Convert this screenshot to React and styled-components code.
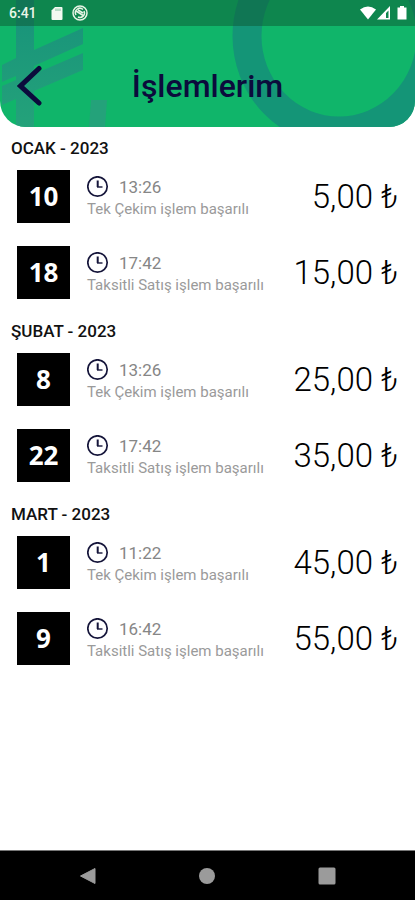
import React from 'react'
import styled, { createGlobalStyle } from 'styled-components'

const months = [
    {
        title: 'OCAK - 2023',
        items: [
            { day: 10, time: '13:26', text: 'Tek Çekim işlem başarılı', amount: '5,00 ₺' },
            { day: 18, time: '17:42', text: 'Taksitli Satış işlem başarılı', amount: '15,00 ₺' },
        ],
    },
    {
        title: 'ŞUBAT - 2023',
        items: [
            { day: 8, time: '13:26', text: 'Tek Çekim işlem başarılı', amount: '25,00 ₺' },
            { day: 22, time: '17:42', text: 'Taksitli Satış işlem başarılı', amount: '35,00 ₺' },
        ],
    },
    {
        title: 'MART - 2023',
        items: [
            { day: 1, time: '11:22', text: 'Tek Çekim işlem başarılı', amount: '45,00 ₺' },
            { day: 9, time: '16:42', text: 'Taksitli Satış işlem başarılı', amount: '55,00 ₺' },
        ],
    },
]

function HeaderArt() {
    return (
        <Art viewBox="0 0 415 127" preserveAspectRatio="xMidYMin slice" aria-hidden="true">
            <defs>
                <linearGradient id="lira" x1="0" y1="0" x2="0" y2="1">
                    <stop offset="0" stopColor="#17927a" />
                    <stop offset="1" stopColor="#24a27a" />
                </linearGradient>
            </defs>
            <path
                fill="url(#lira)"
                d="M16 0H34V50L83 28V44L34 66V74L83 53V70L34 91V127H16V99L2 105V86L16 80V76L2 82V65L16 58Z"
            />
            <path fill="#24a27a" d="M91 100H107L105 127H89Z" />
            <ellipse cx="339" cy="36" rx="92" ry="95" fill="none" stroke="#149577" strokeWidth="29" />
        </Art>
    )
}

function Clock() {
    return (
        <svg width="22" height="22" viewBox="0 0 22 22" fill="none" stroke="#15153a" aria-hidden="true">
            <circle cx="10.5" cy="10.5" r="9.7" strokeWidth="1.7" />
            <path d="M10.7 4.5V11" strokeWidth="2" />
            <path d="M10 11H15.5" strokeWidth="1.4" />
        </svg>
    )
}

function StatusIcons() {
    return (
        <IconGroup>
            <svg width="12" height="15" viewBox="0 0 12 15" aria-hidden="true">
                <path fill="#f4faf2" d="M4 1H10.5Q11.5 1 11.5 2V13Q11.5 14 10.5 14H1.5Q.5 14 .5 13V4.5Z" />
                <path stroke="#7fbf9c" d="M5 2.5V5M7 2.5V5M9 2.5V5" />
            </svg>
            <svg width="16" height="16" viewBox="0 0 16 16" fill="none" stroke="#e6f4e4" aria-hidden="true">
                <circle cx="8" cy="8" r="7" strokeWidth="1.5" />
                <path d="M4 10A4.5 4.5 0 0 1 11 4.5M12 6A4.5 4.5 0 0 1 6 12M4 6L12 11M6 5L11 8" strokeWidth="1.5" />
            </svg>
        </IconGroup>
    )
}

function SignalIcons() {
    return (
        <svg width="50" height="16" viewBox="0 0 50 16" aria-hidden="true">
            <path fill="#fff" d="M1 4.5Q9 -1.5 17 4.5L9 14.5Z" />
            <path fill="#fff" fillRule="evenodd" d="M18 14.5L31 1V14.5ZM27 8V13H29.5V5.5Z" />
            <path fill="#fff" d="M41 1H45V2.5H47.5V14.5H38.5V2.5H41Z" />
        </svg>
    )
}

function App() {
    return (
        <Screen>
            <GlobalStyle />
            <Header>
                <HeaderArt />
                <StatusBar>
                    <span>6:41</span>
                    <StatusIcons />
                    <SignalIcons />
                </StatusBar>
                <TitleBar>
                    <BackButton type="button" aria-label="Geri">
                        <svg width="26" height="42" viewBox="0 0 26 42" aria-hidden="true">
                            <path
                                d="M22 3.5L3.5 21L22 38"
                                fill="none"
                                stroke="#0b0b3c"
                                strokeWidth="5"
                                strokeLinecap="round"
                            />
                        </svg>
                    </BackButton>
                    <Title>İşlemlerim</Title>
                </TitleBar>
            </Header>

            <Main>
                {months.map((month) => (
                    <section key={month.title}>
                        <MonthTitle>{month.title}</MonthTitle>
                        <List>
                            {month.items.map((item) => (
                                <Row key={item.day}>
                                    <Day>{item.day}</Day>
                                    <Info>
                                        <Time>
                                            <Clock />
                                            {item.time}
                                        </Time>
                                        <Description>{item.text}</Description>
                                    </Info>
                                    <Amount>{item.amount}</Amount>
                                </Row>
                            ))}
                        </List>
                    </section>
                ))}
            </Main>

            <NavBar>
                <NavButton type="button" aria-label="Geri git">
                    <svg width="18" height="18" viewBox="0 0 18 18" aria-hidden="true">
                        <path d="M1.5 9L16 1.5V16.5Z" fill="#9b9b9b" stroke="#9b9b9b" strokeLinejoin="round" />
                    </svg>
                </NavButton>
                <NavButton type="button" aria-label="Ana ekran">
                    <svg width="18" height="18" viewBox="0 0 18 18" aria-hidden="true">
                        <circle cx="9" cy="9" r="8" fill="#9b9b9b" />
                    </svg>
                </NavButton>
                <NavButton type="button" aria-label="Son uygulamalar">
                    <svg width="18" height="18" viewBox="0 0 18 18" aria-hidden="true">
                        <rect x=".5" y=".5" width="17" height="17" rx="1.5" fill="#9b9b9b" />
                    </svg>
                </NavButton>
            </NavBar>
        </Screen>
    )
}

export default App

const GlobalStyle = createGlobalStyle`
    * {
        box-sizing: border-box;
    }

    body {
        margin: 0;
        background: #fff;
        font-family: Roboto, 'Liberation Sans', sans-serif;
    }
`

const Screen = styled.div`
    display: flex;
    flex-direction: column;
    min-height: 100vh;
    background: #fff;
`

const Header = styled.header`
    position: relative;
    overflow: hidden;
    background: #10b56a;
    border-radius: 0 0 26px 26px;
`

const Art = styled.svg`
    position: absolute;
    inset: 0;
    width: 100%;
    height: 100%;
`

const StatusBar = styled.div`
    position: relative;
    display: flex;
    align-items: center;
    height: 26px;
    padding: 0 6px 0 9px;
    background: rgba(12, 88, 50, 0.5);
    color: #eaf6e8;
    font-size: 14px;
    font-weight: 500;
`

const IconGroup = styled.div`
    display: flex;
    align-items: center;
    gap: 9px;
    flex: 1;
    margin-left: 14px;
`

const TitleBar = styled.div`
    position: relative;
    display: grid;
    grid-template-columns: 44px 1fr 44px;
    align-items: center;
    padding-top: 18px;
    height: 101px;
`

const BackButton = styled.button`
    display: flex;
    padding: 0 0 0 17px;
    border: none;
    background: none;
    cursor: pointer;
`

const Title = styled.h1`
    margin: 0;
    color: #0b0b3c;
    font-size: 32px;
    font-weight: 500;
    line-height: 40px;
    text-align: center;
`

const Main = styled.main`
    flex: 1;
`

const MonthTitle = styled.h2`
    margin: 0;
    padding: 12px 11px 0;
    color: #111;
    font-size: 17px;
    font-weight: 500;
    line-height: 19px;
`

const List = styled.ul`
    margin: 0;
    padding: 0;
    list-style: none;
`

const Row = styled.li`
    display: flex;
    align-items: center;
    padding: 12px 17px 11px;
`

const Day = styled.div`
    display: flex;
    align-items: center;
    justify-content: center;
    width: 53px;
    height: 53px;
    padding-bottom: 2px;
    background: #000;
    color: #fff;
    font-family: 'Noto Sans', 'Open Sans', sans-serif;
    font-size: 26px;
    font-weight: 700;
`

const Info = styled.div`
    flex: 1;
    padding: 2px 0 0 17px;
`

const Time = styled.div`
    display: flex;
    align-items: center;
    gap: 10px;
    color: #868686;
    font-size: 17px;
    line-height: 22px;
`

const Description = styled.div`
    color: #9a9a9a;
    font-size: 15px;
    line-height: 22px;
`

const Amount = styled.div`
    color: #000;
    font-size: 33px;
    font-weight: 300;
    line-height: 38px;
    white-space: nowrap;
`

const NavBar = styled.nav`
    display: grid;
    grid-template-columns: repeat(3, 1fr);
    height: 50px;
    padding: 0 28px;
    border-top: 1px solid #777;
    background: #000;
`

const NavButton = styled.button`
    display: flex;
    align-items: center;
    justify-content: center;
    padding: 0;
    border: none;
    background: none;
    cursor: pointer;
`
